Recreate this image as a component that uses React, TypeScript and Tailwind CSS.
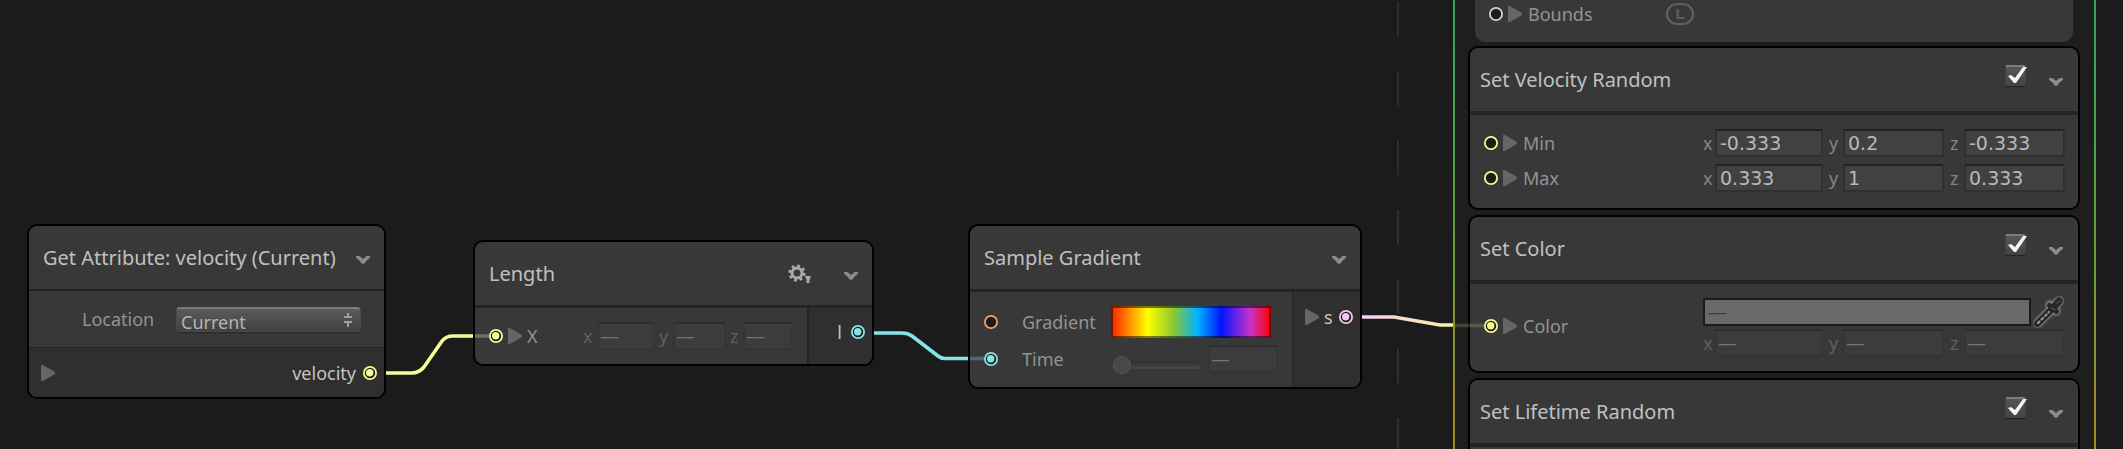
import type { ReactNode } from "react";

const LABEL = "text-[#939393]";

function Chevron() {
  return (
    <button type="button" aria-label="Collapse" className="mt-1 block h-3 w-4 shrink-0 text-[#8c8c8c]">
      <svg viewBox="0 0 16 12" className="block h-3 w-4">
        <path d="M1 2h3.500l3.500 3 3.500-3H15v1.800L10.500 7.500v1L8 10 5.500 8.500v-1L1 3.800z" fill="currentColor" />
      </svg>
    </button>
  );
}

function Port({ color, linked = false }: { color: string; linked?: boolean }) {
  return (
    <svg viewBox="0 0 14 14" className="block size-[14px] shrink-0">
      <circle cx="7" cy="7" r="6.1" fill="#1c1c1c" stroke={color} strokeWidth="1.8" />
      {linked && <circle cx="6.7" cy="6.7" r="3.7" fill={color} />}
    </svg>
  );
}

function Foldout() {
  return (
    <button type="button" aria-label="Expand" className="block h-4 w-[14px] shrink-0">
      <svg viewBox="0 0 14 16" className="block h-4 w-[14px]">
        <path d="M0 0h2l12 7v2L2 16H0z" fill="#666666" />
      </svg>
    </button>
  );
}

function Field({ axis, value, gap, grow }: { axis: string; value?: string; gap: string; grow: string }) {
  return (
    <label className={`flex min-w-0 items-center ${grow}`}>
      <span className={`shrink-0 text-[18px] leading-7 ${gap} ${value ? "text-[#858585]" : "text-[#606060]"}`}>{axis}</span>
      <NumberBox value={value} />
    </label>
  );
}

function NumberBox({ value, label }: { value?: string; label?: string }) {
  return (
    <input
      aria-label={label}
      defaultValue={value ?? "—"}
      disabled={!value}
      className={
        value
          ? "h-7 w-full min-w-0 flex-1 border-2 border-[#303030] border-t-[#222222] bg-[#414141] pl-[3px] font-['DejaVu_Sans',sans-serif] text-[19px] text-[#b8b8b8] outline-none"
          : "h-7 w-full min-w-0 flex-1 border-2 border-[#353535] border-t-[#2c2c2c] bg-[#3c3c3c] pl-[1px] font-['DejaVu_Sans',sans-serif] text-[19px] text-[#757575] outline-none"
      }
    />
  );
}

function Vector({ values }: { values?: [string, string, string] }) {
  return (
    <div className="flex gap-[6px]">
      <Field axis="x" value={values?.[0]} gap="w-3" grow="flex-[120]" />
      <Field axis="y" value={values?.[1]} gap="w-[14px]" grow="flex-[115]" />
      <Field axis="z" value={values?.[2]} gap="w-[14px]" grow="flex-[115]" />
    </div>
  );
}

function Node({ place, title, tools, children }: { place: string; title: string; tools?: ReactNode; children: ReactNode }) {
  return (
    <section className={`absolute overflow-hidden rounded-[10px] border-2 border-black bg-[#383838] ${place}`}>
      <header className="flex h-[63px] items-center pr-[13px] pl-[14px]">
        <h2 className="flex-1 text-[20px] leading-7 text-[#c0c0c0]">{title}</h2>
        {tools}
        <Chevron />
      </header>
      {children}
    </section>
  );
}

function Block({ title, children }: { title: string; children?: ReactNode }) {
  return (
    <section className="overflow-hidden rounded-[10px] border-2 border-black bg-[#383838]">
      <header className="flex h-[63px] items-center pr-[14px] pl-[10px]">
        <h2 className="flex-1 text-[20px] leading-7 text-[#c0c0c0]">{title}</h2>
        <label className="relative mr-[21px] mb-2 block size-[22px]">
          <input
            type="checkbox"
            defaultChecked
            aria-label={`Enable ${title}`}
            className="peer block size-[21px] appearance-none rounded-[2px] border border-[#444444] border-t-2 border-t-[#7c7c7c] bg-linear-to-b from-[#565656] to-[#444444] shadow-[0_1px_1px_#202020]"
          />
          <svg viewBox="0 0 22 22" className="pointer-events-none absolute inset-0 hidden size-[22px] peer-checked:block">
            <path d="M3 11l3-1 4 3 8-11h4L11 18H9z" fill="#f4f4f4" />
          </svg>
        </label>
        <Chevron />
      </header>
      <div className="border-t-4 border-[#242424]">{children}</div>
    </section>
  );
}

function PropertyRow({ label, height = "h-7", linked = false, children }: { label: string; height?: string; linked?: boolean; children: ReactNode }) {
  return (
    <div className="flex items-start pr-[13px] pl-[14px]">
      <div className={`flex flex-1 items-center ${height}`}>
        <Port color="#f5f990" linked={linked} />
        <div className="ml-[5px]"><Foldout /></div>
        <span className={`ml-[6px] text-[18px] leading-7 ${LABEL}`}>{label}</span>
      </div>
      <div className="w-[362px]">{children}</div>
    </div>
  );
}

function Eyedropper() {
  return (
    <button type="button" aria-label="Pick color" className="ml-[2px] block size-8 shrink-0">
      <svg viewBox="0 0 32 32" className="block size-8" fill="none" strokeLinecap="round" strokeLinejoin="round">
        <defs>
          <filter id="glow" x="-20%" y="-20%" width="140%" height="140%">
            <feGaussianBlur stdDeviation="0.8" />
          </filter>
        </defs>
        <g stroke="#828282" filter="url(#glow)">
          <path d="M5 27L18 14" strokeWidth="9" />
          <path d="M17 9l6 6M21 11l5-6" strokeWidth="9" />
        </g>
        <path d="M4.500 27.500L18 14" stroke="#222222" strokeWidth="6.500" />
        <path d="M5 27L16 16" stroke="#8a8a8a" strokeWidth="2.500" strokeDasharray="2 3" />
        <path d="M16.500 9.500l7 6" stroke="#262626" strokeWidth="5" />
        <path d="M21 11l5-6" stroke="#262626" strokeWidth="7" />
        <path d="M19 12l3 2M24 7l3-2" stroke="#525252" strokeWidth="1.500" />
      </svg>
    </button>
  );
}

function Wires() {
  return (
    <svg width="2123" height="449" className="pointer-events-none absolute top-0 left-0" fill="none" strokeWidth="3.6">
      <defs>
        <linearGradient id="color-link" gradientUnits="userSpaceOnUse" x1="1362" y1="0" x2="1455" y2="0">
          <stop stopColor="#f7cdf0" />
          <stop offset="1" stopColor="#f5f2a0" />
        </linearGradient>
      </defs>
      <path d="M386 373H412Q419 373 424 367L442 341Q446 336 453 336H473" stroke="#f8fb9a" />
      <path d="M475 336H489" stroke="#f8fb9a" opacity=".3" />
      <path d="M874 333H902Q908 333 912 336L938 356Q941 358.500 945 358.500H968" stroke="#84e4e7" />
      <path d="M970 358.500H984" stroke="#84e4e7" opacity=".3" />
      <path d="M1362 317H1394L1440 325H1453" stroke="url(#color-link)" />
      <path d="M1455 325.500H1484" stroke="#f5f2a0" opacity=".18" />
    </svg>
  );
}

export default function App() {
  return (
    <main className="relative h-screen min-h-[449px] overflow-hidden bg-[#1b1b1b] font-['Noto_Sans',sans-serif]">
      <svg width="2" height="449" className="absolute top-0 left-[1397px]">
        <defs>
          <linearGradient id="dash" gradientUnits="userSpaceOnUse" x1="0" y1="0" x2="0" y2="449">
            <stop stopColor="#203526" />
            <stop offset="1" stopColor="#33331f" />
          </linearGradient>
        </defs>
        <path d="M1 2V449" stroke="url(#dash)" strokeWidth="2" strokeDasharray="34.5 34.8" />
      </svg>

      <Node place="left-[27px] top-[224px] w-[359px]" title="Get Attribute: velocity (Current)">
        <div className="flex h-[58px] items-center justify-between border-t-2 border-[#242424] pr-[23px] pl-[53px]">
          <label htmlFor="location" className={`text-[18px] leading-7 ${LABEL}`}>Location</label>
          <div className="relative w-[185px]">
            <select
              id="location"
              className="block h-[25px] w-full appearance-none rounded-[4px] border border-[#4b4b4b] border-t-2 border-t-[#7b7b7b] bg-linear-to-b from-[#5b5b5b] to-[#414141] pt-[3px] pl-1 text-[18px] leading-[20px] text-[#b4b4b4] shadow-[0_1px_1px_#262626]"
            >
              <option>Current</option>
            </select>
            <svg viewBox="0 0 8 14" className="pointer-events-none absolute top-[6px] right-[9px] h-[14px] w-2">
              <path d="M3 0h2v3h3v2H0V3h3zM0 8h8v2H5v4H3v-4H0z" fill="#a0a0a0" />
            </svg>
          </div>
        </div>
        <div className="flex h-[50px] items-center border-t border-[#242424] bg-[#2f2f2f] pr-[7px] pl-3">
          <Foldout />
          <span className="flex-1 pr-[7px] text-right text-[18px] leading-7 text-[#c4c4c4]">velocity</span>
          <Port color="#f8fb9a" linked />
        </div>
      </Node>

      <Node
        place="left-[473px] top-[240px] w-[401px]"
        title="Length"
        tools={
          <button type="button" aria-label="Settings" className="mr-[31px] block h-5 w-6">
            <svg viewBox="0 0 24 20" className="block h-5 w-6">
              <circle cx="9" cy="9" r="5" fill="none" stroke="#aaaaaa" strokeWidth="3" />
              <circle cx="9" cy="9" r="7.300" fill="none" stroke="#aaaaaa" strokeWidth="2.600" strokeDasharray="2.870 2.870" />
              <path d="M17 12h6l-1.500 4v3h-3v-3z" fill="#aaaaaa" />
            </svg>
          </button>
        }
      >
        <div className="flex h-[59px] border-t-[3px] border-[#242424]">
          <div className="flex flex-1 items-center pr-[14px] pl-[14px]">
            <Port color="#f8fb9a" linked />
            <div className="ml-[5px]"><Foldout /></div>
            <span className={`ml-[5px] flex-1 text-[18px] leading-7 ${LABEL}`}>X</span>
            <div className="flex w-[210px] gap-1">
              <Field axis="x" gap="w-[14px]" grow="flex-[72]" />
              <Field axis="y" gap="w-[14px]" grow="flex-[67]" />
              <Field axis="z" gap="w-[13px]" grow="flex-[63]" />
            </div>
          </div>
          <div className="flex w-[65px] justify-end border-l-2 border-[#242424] bg-[#2f2f2f] pt-[10px] pr-[7px]">
            <div className="flex h-7 items-center gap-[9px]">
              <span className="text-[18px] leading-7 text-[#c4c4c4]">l</span>
              <Port color="#84e4e7" linked />
            </div>
          </div>
        </div>
      </Node>

      <Node place="left-[968px] top-[224px] w-[394px]" title="Sample Gradient">
        <div className="flex h-[98px] border-t-[3px] border-[#242424]">
          <div className="flex-1 pt-[14px] pr-[14px] pl-[14px]">
            <div className="flex h-8 items-center">
              <Port color="#f7a266" />
              <span className={`ml-6 w-[89px] text-[18px] leading-7 ${LABEL}`}>Gradient</span>
              <button
                type="button"
                aria-label="Edit gradient"
                className="mr-[7px] h-8 flex-1 border-2 border-black/50 bg-[linear-gradient(90deg,#ff1e00,#ffff00_23%,#8cc832_39%,#00b4ff_54%,#0014ff_69%,#c832c8_87%,#ff0000)] bg-origin-border"
              />
            </div>
            <div className="mt-[7px] flex h-7 items-center">
              <Port color="#84e4e7" linked />
              <label htmlFor="time" className={`ml-6 w-[89px] text-[18px] leading-7 ${LABEL}`}>Time</label>
              <input
                id="time"
                type="range"
                defaultValue={0}
                disabled
                className="mt-3 ml-[2px] h-[18px] w-[86px] appearance-none bg-[linear-gradient(#2e2e2e,#484848)] bg-[length:100%_8px] bg-center bg-no-repeat [&::-webkit-slider-thumb]:size-[18px] [&::-webkit-slider-thumb]:appearance-none [&::-webkit-slider-thumb]:rounded-full [&::-webkit-slider-thumb]:border [&::-webkit-slider-thumb]:border-[#565656] [&::-webkit-slider-thumb]:bg-[#484848]"
              />
              <div className="ml-[9px] flex flex-1"><NumberBox label="Time value" /></div>
            </div>
          </div>
          <div className="w-[68px] border-l border-[#242424] bg-[#2f2f2f] pt-[11px] pr-[7px] pl-3">
            <div className="flex h-7 items-center">
              <Foldout />
              <span className="flex-1 pl-[5px] text-[18px] leading-7 text-[#c4c4c4]">s</span>
              <Port color="#f5c8f2" linked />
            </div>
          </div>
        </div>
      </Node>

      <div className="absolute top-0 left-[1453px] h-full w-[643px] bg-linear-to-b from-[#2aa862] via-[#5ba03a] via-50% to-[#a68a1c] px-[2px]">
        <div className="h-full overflow-hidden bg-[#1e1e1e] pr-[14px] pl-[13px]">
          <div className="mx-[7px] flex h-[42px] items-start rounded-b-[10px] bg-[#383838] pl-[14px]">
            <div className="flex h-7 items-center">
              <Port color="#d0d0d0" />
              <div className="ml-[5px]"><Foldout /></div>
              <span className={`ml-[6px] w-[138px] text-[18px] leading-7 ${LABEL}`}>Bounds</span>
              <button type="button" className="flex h-[22px] w-7 items-center justify-center rounded-full border-2 border-[#606060] font-['Liberation_Sans',sans-serif] text-[15px] leading-4 font-bold text-[#606060]">
                L
              </button>
            </div>
          </div>
          <div className="mt-1 flex flex-col gap-[5px]">
            <Block title="Set Velocity Random">
              <div className="flex flex-col gap-[7px] pt-[14px] pb-[16px]">
                <PropertyRow label="Min"><Vector values={["-0.333", "0.2", "-0.333"]} /></PropertyRow>
                <PropertyRow label="Max"><Vector values={["0.333", "1", "0.333"]} /></PropertyRow>
              </div>
            </Block>
            <Block title="Set Color">
              <div className="pt-[14px] pb-[14px]">
                <PropertyRow label="Color" height="h-14" linked>
                  <div className="mb-[3px] flex h-7 items-center">
                    <input
                      aria-label="Color value"
                      defaultValue="—"
                      className="h-7 min-w-0 flex-1 border-2 border-[#1c1c1c] bg-[#696969] pl-[3px] font-['DejaVu_Sans',sans-serif] text-[19px] text-[#3c3c3c] outline-none"
                    />
                    <Eyedropper />
                  </div>
                  <Vector />
                </PropertyRow>
              </div>
            </Block>
            <Block title="Set Lifetime Random">
              <div className="h-24" />
            </Block>
          </div>
        </div>
      </div>

      <Wires />
    </main>
  );
}
